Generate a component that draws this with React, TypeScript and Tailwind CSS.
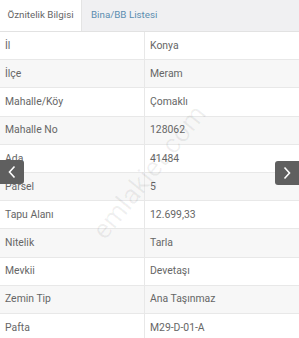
import React from 'react';

const rows: [string, string][] = [
  ['İl', 'Konya'],
  ['İlçe', 'Meram'],
  ['Mahalle/Köy', 'Çomaklı'],
  ['Mahalle No', '128062'],
  ['Ada', '41484'],
  ['Parsel', '5'],
  ['Tapu Alanı', '12.699,33'],
  ['Nitelik', 'Tarla'],
  ['Mevkii', 'Devetaşı'],
  ['Zemin Tip', 'Ana Taşınmaz'],
  ['Pafta', 'M29-D-01-A'],
];

export default function App() {
  return (
    <div className="relative w-[299px] h-[338px] overflow-hidden bg-white text-[10.4px] text-[#666] font-['Roboto',sans-serif]">
      {/* Tabs */}
      <div className="flex h-[32px] bg-[#f0f0f2] border-b border-[#e2e2e2] text-[9.8px]">
        <div className="w-[82px] bg-white flex items-center justify-center border-r border-[#e4e4e4]">
          Öznitelik Bilgisi
        </div>
        <div className="pl-[9px] flex items-center text-[#5b8db0]">Bina/BB Listesi</div>
      </div>

      {/* Table */}
      <div>
        {rows.map(([label, value], i) => (
          <div
            key={label}
            className={`flex h-[28.2px] border-b border-[#e8e8e8] ${i % 2 === 1 ? 'bg-[#f7f7f7]' : 'bg-white'}`}
          >
            <div className="w-[145px] pl-[5px] flex items-center border-r border-[#e8e8e8]">{label}</div>
            <div className="pl-[5px] flex items-center">{value}</div>
          </div>
        ))}
      </div>

      {/* Watermark */}
      <div className="absolute left-[68px] top-[152px] -rotate-[51deg] text-[27px] text-black/[0.06] pointer-events-none select-none">
        emlakjet.com
      </div>

      {/* Slider arrows */}
      <div className="absolute left-0 top-[160px] w-[24px] h-[24px] bg-[#5f5f5f] rounded-r-[3px] flex items-center justify-center">
        <svg width="10" height="14" viewBox="0 0 10 14" fill="none" stroke="white" strokeWidth="1.6">
          <path d="M7.5 1.5 L2.5 7 L7.5 12.5" />
        </svg>
      </div>
      <div className="absolute right-0 top-[161px] w-[24px] h-[24px] bg-[#5f5f5f] rounded-l-[3px] flex items-center justify-center">
        <svg width="10" height="14" viewBox="0 0 10 14" fill="none" stroke="white" strokeWidth="1.6">
          <path d="M2.5 1.5 L7.5 7 L2.5 12.5" />
        </svg>
      </div>
    </div>
  );
}
